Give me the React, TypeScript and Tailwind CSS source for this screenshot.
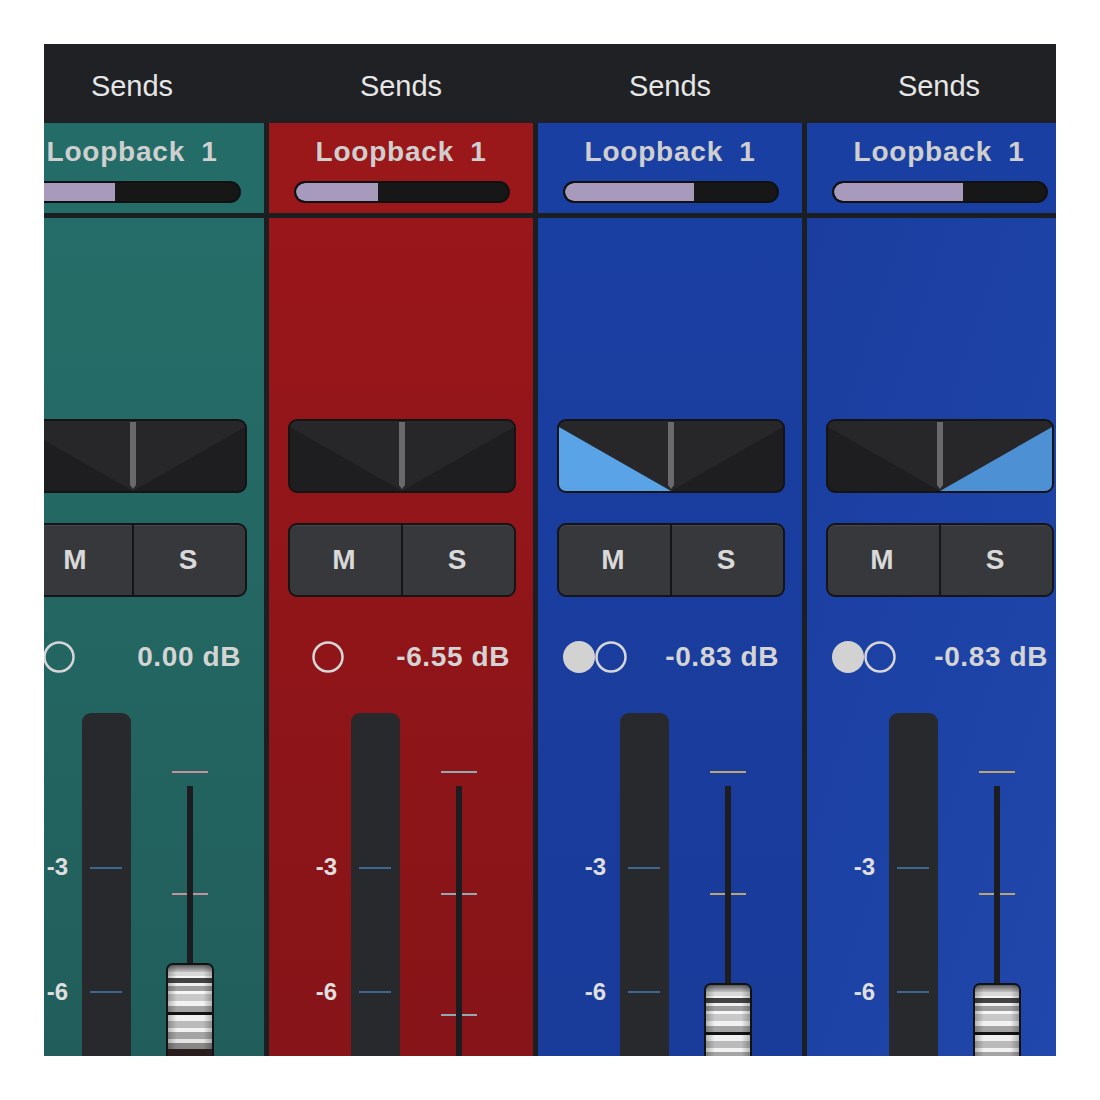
import React from "react";

type Pan = "center" | "left" | "right";

type Strip = {
  head: string;
  body: string;
  send: number;
  pan: Pan;
  stereo: boolean;
  gain: string;
  tick: string;
  cap: string | null;
};

const strips: Strip[] = [
  {
    head: "bg-[#246c67]",
    body: "bg-linear-to-b from-[#256d68] to-[#215e5b]",
    send: 88,
    pan: "center",
    stereo: false,
    gain: "0.00 dB",
    tick: "bg-[#c4919a]",
    cap: "top-[250px]",
  },
  {
    head: "bg-[#9a171a]",
    body: "bg-linear-to-b from-[#99161a] to-[#861418]",
    send: 82,
    pan: "center",
    stereo: false,
    gain: "-6.55 dB",
    tick: "bg-[#8eabb1]",
    cap: null,
  },
  {
    head: "bg-[#1a3fa2]",
    body: "bg-linear-to-b from-[#1a3fa2] to-[#193b9a]",
    send: 129,
    pan: "left",
    stereo: true,
    gain: "-0.83 dB",
    tick: "bg-[#bba474]",
    cap: "top-[270px]",
  },
  {
    head: "bg-[#1a3fa2]",
    body: "bg-linear-to-br from-[#1a3d9f] to-[#2047ab]",
    send: 129,
    pan: "right",
    stereo: true,
    gain: "-0.83 dB",
    tick: "bg-[#bba474]",
    cap: "top-[270px]",
  },
];

const font = "font-['Liberation_Sans',Arial,sans-serif]";

function PanBox({ side }: { side: Pan }) {
  return (
    <div className="h-[74px] w-[228px] overflow-hidden rounded-[9px] border-2 border-[#141416] bg-[#1e1e20]">
      <svg width="224" height="70" viewBox="0 0 224 70" className="block">
        <polygon points="0,0 224,0 224,6 112,70 0,6" fill="#272729" />
        {side === "left" && <polygon points="0,6 0,70 112,70" fill="#5aa3e6" />}
        {side === "right" && <polygon points="224,6 224,70 112,70" fill="#4d90d4" />}
        <path d="M109 1 H115 V64 L112 68 L109 64 Z" fill="#6a6a6d" />
      </svg>
    </div>
  );
}

// chrome fader knob, drawn as stacked bands
const capBands: [number, number, string][] = [
  [7, 11, "#d8d8d8"],
  [11, 13, "#f4f4f4"],
  [13, 18, "#424242"],
  [18, 21, "#f0f0f0"],
  [21, 26, "#9c9c9c"],
  [26, 29, "#f6f6f6"],
  [29, 36, "#c8c8c8"],
  [36, 41, "#f2f2f2"],
  [41, 47, "#a4a4a4"],
  [47, 50, "#121212"],
  [50, 56, "#f0f0f0"],
  [56, 63, "#bababa"],
  [63, 67, "#f2f2f2"],
  [67, 74, "#a4a4a4"],
  [74, 78, "#e4e4e4"],
  [78, 84, "#878787"],
  [84, 120, "#2a1d1e"],
];

function FaderCap() {
  return (
    <div className="h-[120px] w-[48px] overflow-hidden rounded-t-[7px] border-2 border-[#111213]">
      <svg width="44" height="118" viewBox="0 0 44 118" className="block">
        <defs>
          <linearGradient id="capTop" x1="0" y1="0" x2="0" y2="1">
            <stop offset="0" stopColor="#5c5c5c" />
            <stop offset="1" stopColor="#c4c4c4" />
          </linearGradient>
          <linearGradient id="capSide" x1="0" y1="0" x2="1" y2="0">
            <stop offset="0" stopColor="#000" stopOpacity="0.25" />
            <stop offset="0.2" stopColor="#000" stopOpacity="0" />
            <stop offset="0.8" stopColor="#000" stopOpacity="0" />
            <stop offset="1" stopColor="#000" stopOpacity="0.25" />
          </linearGradient>
        </defs>
        <rect x="0" y="0" width="44" height="7" fill="url(#capTop)" />
        {capBands.map(([a, b, c]) => (
          <rect key={a} x="0" y={a} width="44" height={b - a} fill={c} />
        ))}
        <rect x="0" y="0" width="44" height="84" fill="url(#capSide)" />
      </svg>
    </div>
  );
}

function Circles({ stereo }: { stereo: boolean }) {
  if (!stereo) {
    return (
      <svg width="34" height="34" viewBox="0 0 34 34" className="ml-[42px] block">
        <circle cx="17" cy="17" r="14.5" fill="none" stroke="#d6d6d6" strokeWidth="2.5" />
      </svg>
    );
  }
  return (
    <svg width="68" height="34" viewBox="0 0 68 34" className="ml-[24px] block">
      <circle cx="17" cy="17" r="16" fill="#d2d2d2" />
      <circle cx="49" cy="17" r="14.5" fill="none" stroke="#d6d6d6" strokeWidth="2.5" />
    </svg>
  );
}

function ChannelStrip({ s }: { s: Strip }) {
  return (
    <div className="flex w-[264px] shrink-0 flex-col gap-[5px]">
      {/* send name + level */}
      <div className={`flex h-[90px] flex-col ${s.head}`}>
        <div className="mt-[15px] flex h-[28px] items-center justify-center text-[28px] font-bold leading-none tracking-[0.8px] text-[#cfcfcf]">
          Loopback<span className="ml-[16px]">1</span>
        </div>
        <div className="ml-[25px] mt-[15px] h-[22px] w-[216px] overflow-hidden rounded-full border-2 border-[#111] bg-[#171717]">
          <div
            className="h-full rounded-l-full bg-[#a79abd]"
            style={{ width: `${s.send}px` }}
          />
        </div>
      </div>

      {/* strip body */}
      <div className={`flex h-[838px] flex-col ${s.body}`}>
        <div className="ml-[19px] mt-[201px]">
          <PanBox side={s.pan} />
        </div>

        <div className="ml-[19px] mt-[30px] flex h-[74px] w-[228px] overflow-hidden rounded-[9px] border-2 border-[#151517] bg-[#36383b] text-[28px] font-bold text-[#d9d9d9] shadow-[inset_0_1px_0_rgba(255,255,255,0.08)]">
          <div className="flex flex-1 items-center justify-center pr-[3px] border-r-2 border-[#151517]">M</div>
          <div className="flex flex-1 items-center justify-center pr-[3px]">S</div>
        </div>

        <div className="mt-[43px] flex h-[34px] w-[241px] items-center">
          <Circles stereo={s.stereo} />
          <span className="ml-auto text-[28px] font-bold leading-none tracking-[0.6px] text-[#d4d4d4]">
            {s.gain}
          </span>
        </div>

        {/* meter + fader */}
        <div className="mt-[39px] flex flex-1">
          <div className="relative w-[68px] text-[24px] font-bold leading-none text-[#dedede]">
            <span className="absolute right-0 top-[142px]">-3</span>
            <span className="absolute right-0 top-[267px]">-6</span>
          </div>
          <div className="relative ml-[14px] w-[49px] rounded-t-[9px] bg-[#27292d]">
            <div className="absolute left-[8px] top-[154px] h-[2px] w-[32px] bg-[#3b6791]" />
            <div className="absolute left-[8px] top-[278px] h-[2px] w-[32px] bg-[#3b6791]" />
          </div>
          <div className="relative ml-[35px] w-[48px]">
            <div className={`absolute left-[6px] top-[58px] h-[2px] w-[36px] ${s.tick}`} />
            <div className={`absolute left-[6px] top-[180px] h-[2px] w-[36px] ${s.tick}`} />
            <div className={`absolute left-[6px] top-[301px] h-[2px] w-[36px] ${s.tick}`} />
            <div className="absolute bottom-0 left-[21px] top-[73px] w-[6px] bg-[#1c1d20]" />
            {s.cap && (
              <div className={`absolute left-0 ${s.cap}`}>
                <FaderCap />
              </div>
            )}
          </div>
        </div>
      </div>
    </div>
  );
}

export default function App() {
  return (
    <div className={`h-[1100px] w-[1100px] bg-white p-[44px] ${font}`}>
      <div className="h-[1012px] w-[1012px] overflow-hidden bg-[#1b1f22]">
        <div className="-ml-[44px] w-[1076px]">
          <div className="flex h-[79px] gap-[5px] bg-[#202124]">
            {strips.map((_, i) => (
              <div
                key={i}
                className="flex w-[264px] shrink-0 items-center justify-center pt-[6px] text-[29px] leading-none text-[#e6e6e6]"
              >
                Sends
              </div>
            ))}
          </div>
          <div className="flex gap-[5px]">
            {strips.map((s, i) => (
              <ChannelStrip key={i} s={s} />
            ))}
          </div>
        </div>
      </div>
    </div>
  );
}
